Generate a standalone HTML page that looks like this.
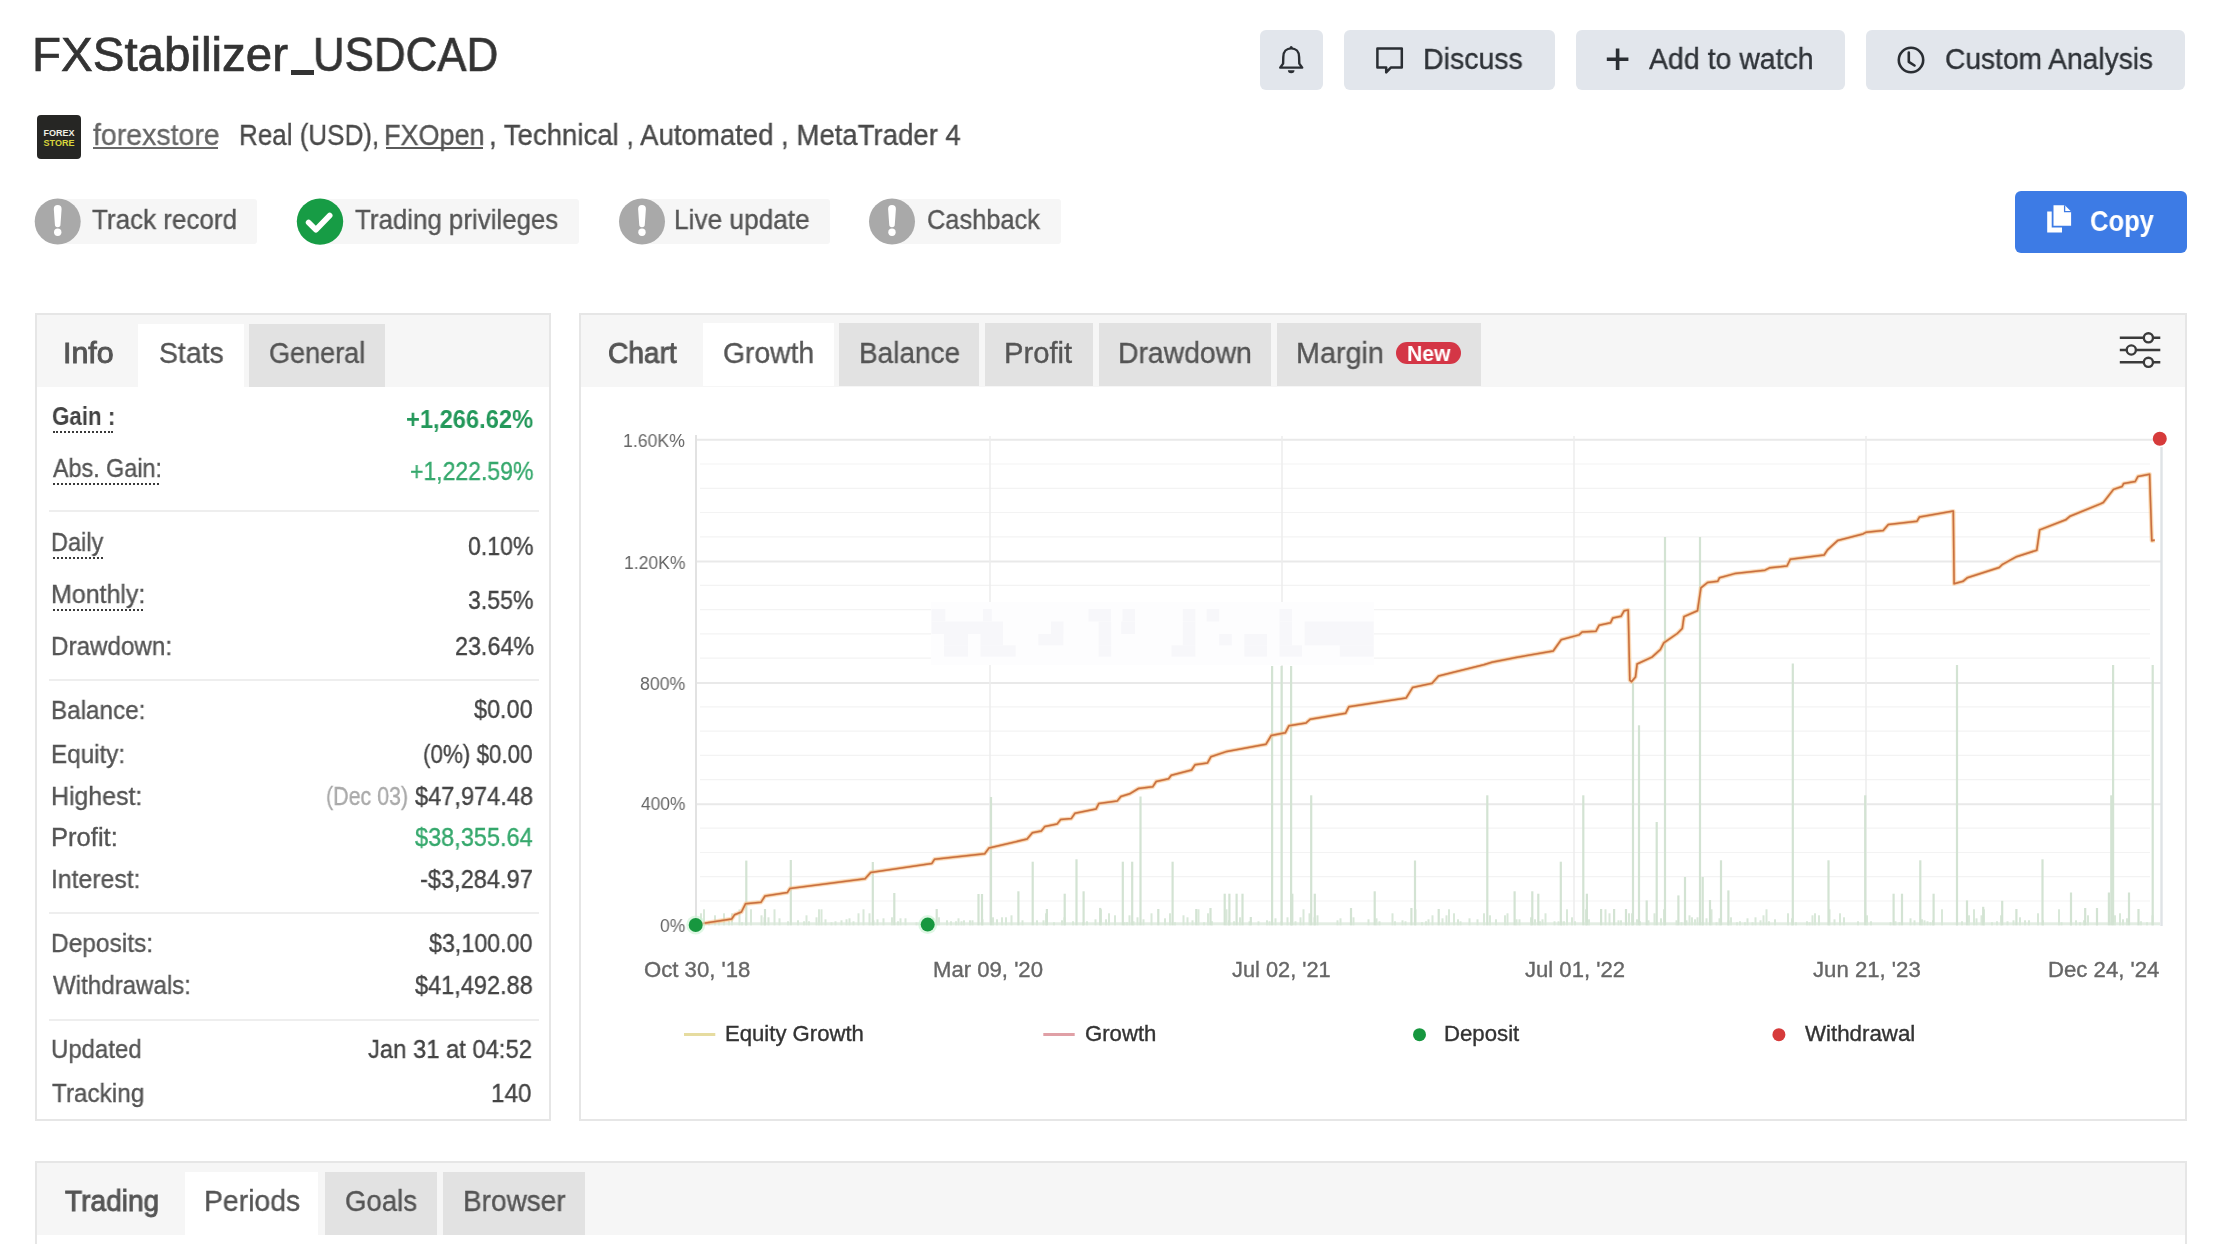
<!DOCTYPE html>
<html><head><meta charset="utf-8"><title>FXStabilizer_USDCAD</title>
<style>
html,body{margin:0;padding:0;background:#fff;width:2230px;height:1244px;overflow:hidden;position:relative;}
body{font-family:"Liberation Sans",sans-serif;}
.abs{position:absolute;}
.t{position:absolute;line-height:1;white-space:nowrap;transform-origin:0 0;will-change:transform;}
</style></head><body>
<div class="abs" style="left:291.3px;top:70.2px;width:22.399999999999977px;height:4.3999999999999915px;background:#333;"></div>
<div class="abs" style="left:1260px;top:29.5px;width:63px;height:60.5px;background:#e2e6ec;border-radius:6px;"></div>
<div class="abs" style="left:1343.5px;top:29.5px;width:211.5px;height:60.5px;background:#e2e6ec;border-radius:6px;"></div>
<div class="abs" style="left:1575.5px;top:29.5px;width:269.0px;height:60.5px;background:#e2e6ec;border-radius:6px;"></div>
<div class="abs" style="left:1866px;top:29.5px;width:318.5px;height:60.5px;background:#e2e6ec;border-radius:6px;"></div>
<svg class="abs" style="left:0;top:0" width="2230" height="260" viewBox="0 0 2230 260">
<g fill="none" stroke="#2a2e33" stroke-width="2.6" stroke-linejoin="round" stroke-linecap="round">
 <path d="M1280.2 67.6 L1302.2 67.6 L1299.3 63.6 L1299.1 57 C1299.1 51.6 1295.8 48.4 1291.2 48.4 C1286.6 48.4 1283.3 51.6 1283.3 57 L1283.1 63.6 Z" stroke-width="2.4"/>
 <path d="M1377.4 48.6 H1401.8 V67.4 H1391 L1386.2 72.4 V67.4 H1377.4 Z" stroke-width="2.5"/>
 <path d="M1617.6 48.5 V70 M1606.8 59.2 H1628.4" stroke-width="3.6" stroke-linecap="butt"/>
 <circle cx="1911" cy="60" r="12.2"/>
 <path d="M1908.8 52.5 V61.8 L1914.5 65.5"/>
</g>
<path d="M1287.9 70.2 h6.6 a3.3 3 0 0 1 -6.6 0 z" fill="#2a2e33"/>
<circle cx="1291.2" cy="47.4" r="1.5" fill="#2a2e33"/>
</svg>
<div class="abs" style="left:37.2px;top:114.9px;width:43.5px;height:43.900000000000006px;background:#262624;border-radius:4px;"></div>
<svg class="abs" style="left:37px;top:115px" width="44" height="44" viewBox="0 0 44 44">
<text x="22" y="21" text-anchor="middle" font-family="Liberation Sans" font-weight="bold" font-size="9.5" fill="#f1f1e6" textLength="31" lengthAdjust="spacingAndGlyphs">FOREX</text>
<text x="22" y="30.5" text-anchor="middle" font-family="Liberation Sans" font-weight="bold" font-size="9.5" fill="#d9d63c" textLength="31" lengthAdjust="spacingAndGlyphs">STORE</text>
</svg>
<div class="abs" style="left:92.8px;top:147.2px;width:125.50000000000001px;height:2.0px;background:#6a6a6a;"></div>
<div class="abs" style="left:386px;top:147.2px;width:97px;height:2.0px;background:#5a5a5a;"></div>
<div class="abs" style="left:57.7px;top:199px;width:199.5px;height:45.30000000000001px;background:#f6f6f6;border-radius:0 3px 3px 0;"></div>
<div class="abs" style="left:319.6px;top:199px;width:259.1px;height:45.30000000000001px;background:#f6f6f6;border-radius:0 3px 3px 0;"></div>
<div class="abs" style="left:642px;top:199px;width:187.79999999999995px;height:45.30000000000001px;background:#f6f6f6;border-radius:0 3px 3px 0;"></div>
<div class="abs" style="left:892px;top:199px;width:168.79999999999995px;height:45.30000000000001px;background:#f6f6f6;border-radius:0 3px 3px 0;"></div>
<svg class="abs" style="left:0;top:190px" width="1100" height="64" viewBox="0 190 1100 64">
<circle cx="57.7" cy="221.6" r="23" fill="#a9a9a9"/>
<circle cx="642" cy="221.6" r="23" fill="#a9a9a9"/>
<circle cx="892" cy="221.6" r="23" fill="#a9a9a9"/>
<g fill="#ffffff">
 <path d="M53.800000000000004 209 a3.9 3.9 0 0 1 7.8 0 l-1.1 15.5 a2.8 2.8 0 0 1 -5.6 0 z"/><circle cx="57.7" cy="232.3" r="3.7"/>
 <path d="M638.1 209 a3.9 3.9 0 0 1 7.8 0 l-1.1 15.5 a2.8 2.8 0 0 1 -5.6 0 z"/><circle cx="642" cy="232.3" r="3.7"/>
 <path d="M888.1 209 a3.9 3.9 0 0 1 7.8 0 l-1.1 15.5 a2.8 2.8 0 0 1 -5.6 0 z"/><circle cx="892" cy="232.3" r="3.7"/>
</g>
<circle cx="320" cy="221.6" r="23.2" fill="#179c45"/>
<path d="M308.6 222.5 l7.3 7.2 l13.8 -14.2" fill="none" stroke="#ffffff" stroke-width="5.6" stroke-linecap="round" stroke-linejoin="round"/>
</svg>
<div class="abs" style="left:2015.3px;top:191px;width:171.29999999999995px;height:61.69999999999999px;background:#3d7be5;border-radius:6px;"></div>
<svg class="abs" style="left:2040px;top:200px" width="40" height="40" viewBox="2040 200 40 40">
<path d="M2047.2 211.5 h4.5 v16 h10.3 v5 h-14.8 z" fill="#fff"/>
<path d="M2053.5 205.2 h11.3 l6.3 6.3 v14.3 h-17.6 z" fill="#fff"/>
<path d="M2064.6 205.2 v6.5 h6.5" fill="none" stroke="#3d7be5" stroke-width="1.3"/>
</svg>
<div class="abs" style="left:35px;top:313px;width:516px;height:808px;border:2px solid #e6e6e6;box-sizing:border-box;background:#fff;"></div>
<div class="abs" style="left:37px;top:315px;width:512px;height:71.5px;background:#f6f6f6;"></div>
<div class="abs" style="left:138px;top:323.5px;width:105.5px;height:63.0px;background:#ffffff;"></div>
<div class="abs" style="left:249px;top:323.5px;width:135.7px;height:63.0px;background:#e2e2e2;"></div>
<div class="abs" style="left:48.7px;top:510.4px;width:490.3px;height:2.0px;background:#eeeeee;"></div>
<div class="abs" style="left:48.7px;top:679px;width:490.3px;height:2px;background:#eeeeee;"></div>
<div class="abs" style="left:48.7px;top:912.3px;width:490.3px;height:2.0px;background:#eeeeee;"></div>
<div class="abs" style="left:48.7px;top:1018.8px;width:490.3px;height:2.0px;background:#eeeeee;"></div>
<div class="abs" style="left:52.6px;top:430.6px;width:60.800000000000004px;height:0;border-top:2.4px dotted #3a3a3a;"></div>
<div class="abs" style="left:52.6px;top:482.8px;width:106.80000000000001px;height:0;border-top:2.4px dotted #3a3a3a;"></div>
<div class="abs" style="left:52.6px;top:556.8px;width:50.4px;height:0;border-top:2.4px dotted #3a3a3a;"></div>
<div class="abs" style="left:52.6px;top:608.8px;width:90.20000000000002px;height:0;border-top:2.4px dotted #3a3a3a;"></div>
<div class="abs" style="left:579px;top:313px;width:1608px;height:808px;border:2px solid #e6e6e6;box-sizing:border-box;background:#fff;"></div>
<div class="abs" style="left:581px;top:315px;width:1604px;height:71.5px;background:#f6f6f6;"></div>
<div class="abs" style="left:703px;top:323.3px;width:131.20000000000005px;height:63.19999999999999px;background:#ffffff;"></div>
<div class="abs" style="left:839px;top:323.3px;width:139.79999999999995px;height:63.19999999999999px;background:#e2e2e2;"></div>
<div class="abs" style="left:985px;top:323.3px;width:107.59999999999991px;height:63.19999999999999px;background:#e2e2e2;"></div>
<div class="abs" style="left:1098.9px;top:323.3px;width:171.79999999999995px;height:63.19999999999999px;background:#e2e2e2;"></div>
<div class="abs" style="left:1277.2px;top:323.3px;width:203.5px;height:63.19999999999999px;background:#e2e2e2;"></div>
<div class="abs" style="left:1396px;top:342.3px;width:65.40000000000009px;height:22.099999999999966px;background:#d43646;border-radius:11px;"></div>
<svg class="abs" style="left:2110px;top:325px" width="60" height="50" viewBox="2110 325 60 50">
<g fill="none" stroke="#3a3a3a" stroke-width="2.4">
<path d="M2119.8 337.8 H2143.4 M2153.4 337.8 H2160.3"/>
<path d="M2119.8 350 H2126.3 M2136.3 350 H2160.3"/>
<path d="M2119.8 362.3 H2143.4 M2153.4 362.3 H2160.3"/>
<circle cx="2148.4" cy="337.8" r="4.6"/>
<circle cx="2131.3" cy="350" r="4.6"/>
<circle cx="2148.4" cy="362.3" r="4.6"/>
</g></svg>
<div class="abs" style="left:35px;top:1161px;width:2152px;height:99px;border:2px solid #e6e6e6;box-sizing:border-box;background:#fff;"></div>
<div class="abs" style="left:37px;top:1163px;width:2148px;height:71.70000000000005px;background:#f6f6f6;"></div>
<div class="abs" style="left:185px;top:1171.7px;width:133.2px;height:63.0px;background:#ffffff;"></div>
<div class="abs" style="left:325px;top:1171.7px;width:111.60000000000002px;height:63.0px;background:#e2e2e2;"></div>
<div class="abs" style="left:442.8px;top:1171.7px;width:142.3px;height:63.0px;background:#e2e2e2;"></div>
<svg class="abs" style="left:0;top:0" width="2230" height="1244" viewBox="0 0 2230 1244">
<line x1="700" y1="464.0" x2="2150" y2="464.0" stroke="#f3f3f3" stroke-width="1.2"/>
<line x1="700" y1="488.3" x2="2150" y2="488.3" stroke="#f3f3f3" stroke-width="1.2"/>
<line x1="700" y1="512.5" x2="2150" y2="512.5" stroke="#f3f3f3" stroke-width="1.2"/>
<line x1="700" y1="536.8" x2="2150" y2="536.8" stroke="#f3f3f3" stroke-width="1.2"/>
<line x1="700" y1="585.4" x2="2150" y2="585.4" stroke="#f3f3f3" stroke-width="1.2"/>
<line x1="700" y1="609.7" x2="2150" y2="609.7" stroke="#f3f3f3" stroke-width="1.2"/>
<line x1="700" y1="633.9" x2="2150" y2="633.9" stroke="#f3f3f3" stroke-width="1.2"/>
<line x1="700" y1="658.2" x2="2150" y2="658.2" stroke="#f3f3f3" stroke-width="1.2"/>
<line x1="700" y1="706.8" x2="2150" y2="706.8" stroke="#f3f3f3" stroke-width="1.2"/>
<line x1="700" y1="731.1" x2="2150" y2="731.1" stroke="#f3f3f3" stroke-width="1.2"/>
<line x1="700" y1="755.3" x2="2150" y2="755.3" stroke="#f3f3f3" stroke-width="1.2"/>
<line x1="700" y1="779.6" x2="2150" y2="779.6" stroke="#f3f3f3" stroke-width="1.2"/>
<line x1="700" y1="828.2" x2="2150" y2="828.2" stroke="#f3f3f3" stroke-width="1.2"/>
<line x1="700" y1="852.5" x2="2150" y2="852.5" stroke="#f3f3f3" stroke-width="1.2"/>
<line x1="700" y1="876.7" x2="2150" y2="876.7" stroke="#f3f3f3" stroke-width="1.2"/>
<line x1="700" y1="901.0" x2="2150" y2="901.0" stroke="#f3f3f3" stroke-width="1.2"/>
<line x1="696" y1="439.7" x2="2161" y2="439.7" stroke="#e9e9e9" stroke-width="2"/>
<line x1="696" y1="561.5" x2="2161" y2="561.5" stroke="#e9e9e9" stroke-width="2"/>
<line x1="696" y1="682.9" x2="2161" y2="682.9" stroke="#e9e9e9" stroke-width="2"/>
<line x1="696" y1="804.3" x2="2161" y2="804.3" stroke="#e9e9e9" stroke-width="2"/>
<line x1="990" y1="436" x2="990" y2="925" stroke="#ececec" stroke-width="1.5"/>
<line x1="1282" y1="436" x2="1282" y2="925" stroke="#ececec" stroke-width="1.5"/>
<line x1="1574" y1="436" x2="1574" y2="925" stroke="#ececec" stroke-width="1.5"/>
<line x1="1866" y1="436" x2="1866" y2="925" stroke="#ececec" stroke-width="1.5"/>
<line x1="696" y1="435" x2="696" y2="926" stroke="#e2e2e2" stroke-width="2"/>
<line x1="2161.5" y1="447" x2="2161.5" y2="926" stroke="#dfe3e6" stroke-width="2.4"/>
<rect x="931" y="602" width="443" height="63" fill="#fdfdfe"/>
<rect x="931.5" y="608.9" width="13.8" height="12.6" fill="#f7f7fa"/>
<rect x="983.0" y="608.9" width="8.8" height="12.6" fill="#f7f7fa"/>
<rect x="1088.5" y="608.9" width="22.6" height="12.6" fill="#f7f7fa"/>
<rect x="1122.5" y="608.9" width="12.6" height="12.6" fill="#f7f7fa"/>
<rect x="1182.8" y="608.9" width="12.6" height="12.6" fill="#f7f7fa"/>
<rect x="1206.6" y="608.9" width="12.6" height="12.6" fill="#f7f7fa"/>
<rect x="1279.5" y="608.9" width="12.6" height="12.6" fill="#f7f7fa"/>
<rect x="931.5" y="621.5" width="71.6" height="12.6" fill="#f7f7fa"/>
<rect x="1050.9" y="621.5" width="12.6" height="12.6" fill="#f7f7fa"/>
<rect x="1098.6" y="621.5" width="12.6" height="12.6" fill="#f7f7fa"/>
<rect x="1121.2" y="621.5" width="13.8" height="12.6" fill="#f7f7fa"/>
<rect x="1182.8" y="621.5" width="12.6" height="12.6" fill="#f7f7fa"/>
<rect x="1279.5" y="621.5" width="12.6" height="12.6" fill="#f7f7fa"/>
<rect x="1304.6" y="621.5" width="69.1" height="12.6" fill="#f7f7fa"/>
<rect x="944.1" y="634.0" width="23.9" height="11.3" fill="#f7f7fa"/>
<rect x="980.5" y="634.0" width="22.6" height="11.3" fill="#f7f7fa"/>
<rect x="1038.3" y="634.0" width="25.1" height="11.3" fill="#f7f7fa"/>
<rect x="1098.6" y="634.0" width="12.6" height="11.3" fill="#f7f7fa"/>
<rect x="1182.8" y="634.0" width="12.6" height="11.3" fill="#f7f7fa"/>
<rect x="1219.2" y="634.0" width="12.6" height="11.3" fill="#f7f7fa"/>
<rect x="1244.3" y="634.0" width="22.6" height="11.3" fill="#f7f7fa"/>
<rect x="1279.5" y="634.0" width="12.6" height="11.3" fill="#f7f7fa"/>
<rect x="1304.6" y="634.0" width="69.1" height="11.3" fill="#f7f7fa"/>
<rect x="944.1" y="645.3" width="23.9" height="11.3" fill="#f7f7fa"/>
<rect x="980.5" y="645.3" width="35.2" height="11.3" fill="#f7f7fa"/>
<rect x="1098.6" y="645.3" width="12.6" height="11.3" fill="#f7f7fa"/>
<rect x="1171.5" y="645.3" width="23.9" height="11.3" fill="#f7f7fa"/>
<rect x="1244.3" y="645.3" width="22.6" height="11.3" fill="#f7f7fa"/>
<rect x="1279.5" y="645.3" width="22.6" height="11.3" fill="#f7f7fa"/>
<rect x="1339.8" y="645.3" width="33.9" height="11.3" fill="#f7f7fa"/>
<rect x="697" y="922.3" width="1463" height="3" fill="#e3ede3"/>
<rect x="700.0" y="913.3" width="2" height="12" fill="#d9e8d9"/>
<rect x="703.0" y="909.3" width="2" height="16" fill="#d9e8d9"/>
<rect x="708.0" y="921.3" width="2" height="4" fill="#d9e8d9"/>
<rect x="714.0" y="915.3" width="2" height="10" fill="#d9e8d9"/>
<rect x="718.0" y="920.3" width="2" height="5" fill="#d9e8d9"/>
<rect x="723.0" y="913.3" width="2" height="12" fill="#d9e8d9"/>
<rect x="728.0" y="921.3" width="2" height="4" fill="#d9e8d9"/>
<rect x="731.0" y="913.3" width="2" height="12" fill="#d9e8d9"/>
<rect x="738.5" y="909.3" width="2" height="16" fill="#d9e8d9"/>
<rect x="741.0" y="922.3" width="2" height="3" fill="#d9e8d9"/>
<rect x="745.0" y="917.3" width="2" height="8" fill="#d9e8d9"/>
<rect x="750.0" y="909.3" width="2" height="16" fill="#d9e8d9"/>
<rect x="760.5" y="915.3" width="2" height="10" fill="#d9e8d9"/>
<rect x="763.5" y="917.3" width="2" height="8" fill="#d9e8d9"/>
<rect x="767.5" y="917.3" width="2" height="8" fill="#d9e8d9"/>
<rect x="773.5" y="909.3" width="2" height="16" fill="#d9e8d9"/>
<rect x="778.5" y="918.3" width="2" height="7" fill="#d9e8d9"/>
<rect x="787.0" y="921.3" width="2" height="4" fill="#d9e8d9"/>
<rect x="797.0" y="920.3" width="2" height="5" fill="#d9e8d9"/>
<rect x="803.0" y="921.3" width="2" height="4" fill="#d9e8d9"/>
<rect x="805.5" y="915.3" width="2" height="10" fill="#d9e8d9"/>
<rect x="808.0" y="921.3" width="2" height="4" fill="#d9e8d9"/>
<rect x="815.5" y="917.3" width="2" height="8" fill="#d9e8d9"/>
<rect x="818.0" y="909.3" width="2" height="16" fill="#d9e8d9"/>
<rect x="820.5" y="909.3" width="2" height="16" fill="#d9e8d9"/>
<rect x="824.5" y="919.3" width="2" height="6" fill="#d9e8d9"/>
<rect x="830.5" y="922.3" width="2" height="3" fill="#d9e8d9"/>
<rect x="834.5" y="921.3" width="2" height="4" fill="#d9e8d9"/>
<rect x="840.5" y="920.3" width="2" height="5" fill="#d9e8d9"/>
<rect x="845.5" y="919.3" width="2" height="6" fill="#d9e8d9"/>
<rect x="848.5" y="918.3" width="2" height="7" fill="#d9e8d9"/>
<rect x="852.5" y="921.3" width="2" height="4" fill="#d9e8d9"/>
<rect x="857.5" y="913.3" width="2" height="12" fill="#d9e8d9"/>
<rect x="862.5" y="909.3" width="2" height="16" fill="#d9e8d9"/>
<rect x="868.5" y="913.3" width="2" height="12" fill="#d9e8d9"/>
<rect x="872.5" y="920.3" width="2" height="5" fill="#d9e8d9"/>
<rect x="876.5" y="919.3" width="2" height="6" fill="#d9e8d9"/>
<rect x="882.5" y="918.3" width="2" height="7" fill="#d9e8d9"/>
<rect x="891.0" y="917.3" width="2" height="8" fill="#d9e8d9"/>
<rect x="897.0" y="921.3" width="2" height="4" fill="#d9e8d9"/>
<rect x="899.5" y="918.3" width="2" height="7" fill="#d9e8d9"/>
<rect x="904.5" y="918.3" width="2" height="7" fill="#d9e8d9"/>
<rect x="915.5" y="922.3" width="2" height="3" fill="#d9e8d9"/>
<rect x="922.0" y="919.3" width="2" height="6" fill="#d9e8d9"/>
<rect x="928.0" y="921.3" width="2" height="4" fill="#d9e8d9"/>
<rect x="932.0" y="918.3" width="2" height="7" fill="#d9e8d9"/>
<rect x="938.0" y="917.3" width="2" height="8" fill="#d9e8d9"/>
<rect x="946.0" y="920.3" width="2" height="5" fill="#d9e8d9"/>
<rect x="950.0" y="921.3" width="2" height="4" fill="#d9e8d9"/>
<rect x="955.0" y="921.3" width="2" height="4" fill="#d9e8d9"/>
<rect x="957.5" y="918.3" width="2" height="7" fill="#d9e8d9"/>
<rect x="960.5" y="921.3" width="2" height="4" fill="#d9e8d9"/>
<rect x="963.0" y="920.3" width="2" height="5" fill="#d9e8d9"/>
<rect x="969.0" y="920.3" width="2" height="5" fill="#d9e8d9"/>
<rect x="971.5" y="920.3" width="2" height="5" fill="#d9e8d9"/>
<rect x="981.5" y="919.3" width="2" height="6" fill="#d9e8d9"/>
<rect x="992.0" y="917.3" width="2" height="8" fill="#d9e8d9"/>
<rect x="996.0" y="919.3" width="2" height="6" fill="#d9e8d9"/>
<rect x="1001.0" y="917.3" width="2" height="8" fill="#d9e8d9"/>
<rect x="1005.0" y="917.3" width="2" height="8" fill="#d9e8d9"/>
<rect x="1010.5" y="915.3" width="2" height="10" fill="#d9e8d9"/>
<rect x="1021.5" y="920.3" width="2" height="5" fill="#d9e8d9"/>
<rect x="1036.0" y="920.3" width="2" height="5" fill="#d9e8d9"/>
<rect x="1042.5" y="920.3" width="2" height="5" fill="#d9e8d9"/>
<rect x="1045.0" y="913.3" width="2" height="12" fill="#d9e8d9"/>
<rect x="1053.0" y="922.3" width="2" height="3" fill="#d9e8d9"/>
<rect x="1061.0" y="920.3" width="2" height="5" fill="#d9e8d9"/>
<rect x="1063.5" y="917.3" width="2" height="8" fill="#d9e8d9"/>
<rect x="1072.0" y="921.3" width="2" height="4" fill="#d9e8d9"/>
<rect x="1082.0" y="922.3" width="2" height="3" fill="#d9e8d9"/>
<rect x="1086.0" y="921.3" width="2" height="4" fill="#d9e8d9"/>
<rect x="1094.5" y="919.3" width="2" height="6" fill="#d9e8d9"/>
<rect x="1100.0" y="909.3" width="2" height="16" fill="#d9e8d9"/>
<rect x="1105.0" y="919.3" width="2" height="6" fill="#d9e8d9"/>
<rect x="1108.0" y="913.3" width="2" height="12" fill="#d9e8d9"/>
<rect x="1114.0" y="915.3" width="2" height="10" fill="#d9e8d9"/>
<rect x="1123.5" y="922.3" width="2" height="3" fill="#d9e8d9"/>
<rect x="1126.0" y="922.3" width="2" height="3" fill="#d9e8d9"/>
<rect x="1128.5" y="915.3" width="2" height="10" fill="#d9e8d9"/>
<rect x="1132.5" y="921.3" width="2" height="4" fill="#d9e8d9"/>
<rect x="1136.5" y="917.3" width="2" height="8" fill="#d9e8d9"/>
<rect x="1142.5" y="919.3" width="2" height="6" fill="#d9e8d9"/>
<rect x="1150.5" y="913.3" width="2" height="12" fill="#d9e8d9"/>
<rect x="1164.0" y="918.3" width="2" height="7" fill="#d9e8d9"/>
<rect x="1169.0" y="913.3" width="2" height="12" fill="#d9e8d9"/>
<rect x="1174.0" y="922.3" width="2" height="3" fill="#d9e8d9"/>
<rect x="1182.5" y="915.3" width="2" height="10" fill="#d9e8d9"/>
<rect x="1186.5" y="917.3" width="2" height="8" fill="#d9e8d9"/>
<rect x="1191.5" y="920.3" width="2" height="5" fill="#d9e8d9"/>
<rect x="1197.5" y="909.3" width="2" height="16" fill="#d9e8d9"/>
<rect x="1203.0" y="922.3" width="2" height="3" fill="#d9e8d9"/>
<rect x="1207.0" y="913.3" width="2" height="12" fill="#d9e8d9"/>
<rect x="1211.0" y="921.3" width="2" height="4" fill="#d9e8d9"/>
<rect x="1225.5" y="909.3" width="2" height="16" fill="#d9e8d9"/>
<rect x="1228.0" y="920.3" width="2" height="5" fill="#d9e8d9"/>
<rect x="1233.0" y="921.3" width="2" height="4" fill="#d9e8d9"/>
<rect x="1239.0" y="917.3" width="2" height="8" fill="#d9e8d9"/>
<rect x="1248.5" y="921.3" width="2" height="4" fill="#d9e8d9"/>
<rect x="1257.5" y="921.3" width="2" height="4" fill="#d9e8d9"/>
<rect x="1266.0" y="920.3" width="2" height="5" fill="#d9e8d9"/>
<rect x="1268.5" y="921.3" width="2" height="4" fill="#d9e8d9"/>
<rect x="1274.5" y="918.3" width="2" height="7" fill="#d9e8d9"/>
<rect x="1280.5" y="921.3" width="2" height="4" fill="#d9e8d9"/>
<rect x="1286.5" y="917.3" width="2" height="8" fill="#d9e8d9"/>
<rect x="1290.5" y="917.3" width="2" height="8" fill="#d9e8d9"/>
<rect x="1294.5" y="921.3" width="2" height="4" fill="#d9e8d9"/>
<rect x="1299.5" y="917.3" width="2" height="8" fill="#d9e8d9"/>
<rect x="1302.5" y="909.3" width="2" height="16" fill="#d9e8d9"/>
<rect x="1308.5" y="913.3" width="2" height="12" fill="#d9e8d9"/>
<rect x="1313.5" y="917.3" width="2" height="8" fill="#d9e8d9"/>
<rect x="1316.5" y="915.3" width="2" height="10" fill="#d9e8d9"/>
<rect x="1336.5" y="920.3" width="2" height="5" fill="#d9e8d9"/>
<rect x="1339.5" y="918.3" width="2" height="7" fill="#d9e8d9"/>
<rect x="1352.5" y="917.3" width="2" height="8" fill="#d9e8d9"/>
<rect x="1367.5" y="919.3" width="2" height="6" fill="#d9e8d9"/>
<rect x="1375.5" y="918.3" width="2" height="7" fill="#d9e8d9"/>
<rect x="1378.5" y="921.3" width="2" height="4" fill="#d9e8d9"/>
<rect x="1391.5" y="913.3" width="2" height="12" fill="#d9e8d9"/>
<rect x="1394.0" y="921.3" width="2" height="4" fill="#d9e8d9"/>
<rect x="1401.5" y="920.3" width="2" height="5" fill="#d9e8d9"/>
<rect x="1404.5" y="921.3" width="2" height="4" fill="#d9e8d9"/>
<rect x="1414.5" y="909.3" width="2" height="16" fill="#d9e8d9"/>
<rect x="1421.0" y="922.3" width="2" height="3" fill="#d9e8d9"/>
<rect x="1425.0" y="921.3" width="2" height="4" fill="#d9e8d9"/>
<rect x="1427.5" y="919.3" width="2" height="6" fill="#d9e8d9"/>
<rect x="1431.5" y="915.3" width="2" height="10" fill="#d9e8d9"/>
<rect x="1441.5" y="918.3" width="2" height="7" fill="#d9e8d9"/>
<rect x="1445.5" y="915.3" width="2" height="10" fill="#d9e8d9"/>
<rect x="1448.0" y="909.3" width="2" height="16" fill="#d9e8d9"/>
<rect x="1453.0" y="913.3" width="2" height="12" fill="#d9e8d9"/>
<rect x="1457.0" y="919.3" width="2" height="6" fill="#d9e8d9"/>
<rect x="1459.5" y="921.3" width="2" height="4" fill="#d9e8d9"/>
<rect x="1468.5" y="918.3" width="2" height="7" fill="#d9e8d9"/>
<rect x="1476.5" y="919.3" width="2" height="6" fill="#d9e8d9"/>
<rect x="1483.0" y="913.3" width="2" height="12" fill="#d9e8d9"/>
<rect x="1489.0" y="915.3" width="2" height="10" fill="#d9e8d9"/>
<rect x="1495.0" y="919.3" width="2" height="6" fill="#d9e8d9"/>
<rect x="1504.0" y="915.3" width="2" height="10" fill="#d9e8d9"/>
<rect x="1506.5" y="913.3" width="2" height="12" fill="#d9e8d9"/>
<rect x="1515.5" y="919.3" width="2" height="6" fill="#d9e8d9"/>
<rect x="1518.5" y="919.3" width="2" height="6" fill="#d9e8d9"/>
<rect x="1530.0" y="917.3" width="2" height="8" fill="#d9e8d9"/>
<rect x="1534.0" y="919.3" width="2" height="6" fill="#d9e8d9"/>
<rect x="1539.0" y="921.3" width="2" height="4" fill="#d9e8d9"/>
<rect x="1541.5" y="919.3" width="2" height="6" fill="#d9e8d9"/>
<rect x="1544.5" y="913.3" width="2" height="12" fill="#d9e8d9"/>
<rect x="1553.5" y="921.3" width="2" height="4" fill="#d9e8d9"/>
<rect x="1557.5" y="921.3" width="2" height="4" fill="#d9e8d9"/>
<rect x="1560.5" y="921.3" width="2" height="4" fill="#d9e8d9"/>
<rect x="1563.0" y="921.3" width="2" height="4" fill="#d9e8d9"/>
<rect x="1566.0" y="909.3" width="2" height="16" fill="#d9e8d9"/>
<rect x="1571.0" y="917.3" width="2" height="8" fill="#d9e8d9"/>
<rect x="1574.0" y="921.3" width="2" height="4" fill="#d9e8d9"/>
<rect x="1585.0" y="909.3" width="2" height="16" fill="#d9e8d9"/>
<rect x="1588.0" y="919.3" width="2" height="6" fill="#d9e8d9"/>
<rect x="1604.5" y="909.3" width="2" height="16" fill="#d9e8d9"/>
<rect x="1608.5" y="913.3" width="2" height="12" fill="#d9e8d9"/>
<rect x="1617.5" y="920.3" width="2" height="5" fill="#d9e8d9"/>
<rect x="1620.0" y="920.3" width="2" height="5" fill="#d9e8d9"/>
<rect x="1625.0" y="915.3" width="2" height="10" fill="#d9e8d9"/>
<rect x="1628.0" y="913.3" width="2" height="12" fill="#d9e8d9"/>
<rect x="1631.0" y="913.3" width="2" height="12" fill="#d9e8d9"/>
<rect x="1636.0" y="919.3" width="2" height="6" fill="#d9e8d9"/>
<rect x="1639.0" y="921.3" width="2" height="4" fill="#d9e8d9"/>
<rect x="1647.5" y="920.3" width="2" height="5" fill="#d9e8d9"/>
<rect x="1653.5" y="913.3" width="2" height="12" fill="#d9e8d9"/>
<rect x="1660.0" y="918.3" width="2" height="7" fill="#d9e8d9"/>
<rect x="1663.0" y="909.3" width="2" height="16" fill="#d9e8d9"/>
<rect x="1675.5" y="920.3" width="2" height="5" fill="#d9e8d9"/>
<rect x="1680.5" y="922.3" width="2" height="3" fill="#d9e8d9"/>
<rect x="1685.5" y="920.3" width="2" height="5" fill="#d9e8d9"/>
<rect x="1688.5" y="915.3" width="2" height="10" fill="#d9e8d9"/>
<rect x="1691.0" y="917.3" width="2" height="8" fill="#d9e8d9"/>
<rect x="1694.0" y="919.3" width="2" height="6" fill="#d9e8d9"/>
<rect x="1696.5" y="917.3" width="2" height="8" fill="#d9e8d9"/>
<rect x="1701.5" y="922.3" width="2" height="3" fill="#d9e8d9"/>
<rect x="1705.5" y="918.3" width="2" height="7" fill="#d9e8d9"/>
<rect x="1710.5" y="909.3" width="2" height="16" fill="#d9e8d9"/>
<rect x="1715.5" y="922.3" width="2" height="3" fill="#d9e8d9"/>
<rect x="1718.5" y="918.3" width="2" height="7" fill="#d9e8d9"/>
<rect x="1727.5" y="920.3" width="2" height="5" fill="#d9e8d9"/>
<rect x="1730.0" y="917.3" width="2" height="8" fill="#d9e8d9"/>
<rect x="1736.0" y="922.3" width="2" height="3" fill="#d9e8d9"/>
<rect x="1739.0" y="921.3" width="2" height="4" fill="#d9e8d9"/>
<rect x="1744.0" y="922.3" width="2" height="3" fill="#d9e8d9"/>
<rect x="1746.5" y="918.3" width="2" height="7" fill="#d9e8d9"/>
<rect x="1751.5" y="922.3" width="2" height="3" fill="#d9e8d9"/>
<rect x="1754.5" y="917.3" width="2" height="8" fill="#d9e8d9"/>
<rect x="1759.5" y="920.3" width="2" height="5" fill="#d9e8d9"/>
<rect x="1762.5" y="915.3" width="2" height="10" fill="#d9e8d9"/>
<rect x="1765.5" y="909.3" width="2" height="16" fill="#d9e8d9"/>
<rect x="1768.0" y="921.3" width="2" height="4" fill="#d9e8d9"/>
<rect x="1774.0" y="919.3" width="2" height="6" fill="#d9e8d9"/>
<rect x="1787.0" y="913.3" width="2" height="12" fill="#d9e8d9"/>
<rect x="1791.0" y="918.3" width="2" height="7" fill="#d9e8d9"/>
<rect x="1795.0" y="922.3" width="2" height="3" fill="#d9e8d9"/>
<rect x="1806.0" y="921.3" width="2" height="4" fill="#d9e8d9"/>
<rect x="1808.5" y="922.3" width="2" height="3" fill="#d9e8d9"/>
<rect x="1811.5" y="915.3" width="2" height="10" fill="#d9e8d9"/>
<rect x="1814.0" y="913.3" width="2" height="12" fill="#d9e8d9"/>
<rect x="1818.0" y="915.3" width="2" height="10" fill="#d9e8d9"/>
<rect x="1828.5" y="909.3" width="2" height="16" fill="#d9e8d9"/>
<rect x="1833.5" y="919.3" width="2" height="6" fill="#d9e8d9"/>
<rect x="1839.0" y="913.3" width="2" height="12" fill="#d9e8d9"/>
<rect x="1843.0" y="917.3" width="2" height="8" fill="#d9e8d9"/>
<rect x="1857.0" y="921.3" width="2" height="4" fill="#d9e8d9"/>
<rect x="1866.0" y="915.3" width="2" height="10" fill="#d9e8d9"/>
<rect x="1870.0" y="921.3" width="2" height="4" fill="#d9e8d9"/>
<rect x="1889.5" y="922.3" width="2" height="3" fill="#d9e8d9"/>
<rect x="1894.5" y="921.3" width="2" height="4" fill="#d9e8d9"/>
<rect x="1898.5" y="922.3" width="2" height="3" fill="#d9e8d9"/>
<rect x="1909.5" y="918.3" width="2" height="7" fill="#d9e8d9"/>
<rect x="1913.5" y="920.3" width="2" height="5" fill="#d9e8d9"/>
<rect x="1921.0" y="919.3" width="2" height="6" fill="#d9e8d9"/>
<rect x="1923.5" y="920.3" width="2" height="5" fill="#d9e8d9"/>
<rect x="1926.5" y="921.3" width="2" height="4" fill="#d9e8d9"/>
<rect x="1929.5" y="922.3" width="2" height="3" fill="#d9e8d9"/>
<rect x="1932.0" y="920.3" width="2" height="5" fill="#d9e8d9"/>
<rect x="1941.0" y="909.3" width="2" height="16" fill="#d9e8d9"/>
<rect x="1956.0" y="921.3" width="2" height="4" fill="#d9e8d9"/>
<rect x="1961.0" y="921.3" width="2" height="4" fill="#d9e8d9"/>
<rect x="1968.0" y="915.3" width="2" height="10" fill="#d9e8d9"/>
<rect x="1973.0" y="909.3" width="2" height="16" fill="#d9e8d9"/>
<rect x="1975.5" y="918.3" width="2" height="7" fill="#d9e8d9"/>
<rect x="1980.5" y="915.3" width="2" height="10" fill="#d9e8d9"/>
<rect x="1983.0" y="909.3" width="2" height="16" fill="#d9e8d9"/>
<rect x="1991.0" y="922.3" width="2" height="3" fill="#d9e8d9"/>
<rect x="1996.0" y="921.3" width="2" height="4" fill="#d9e8d9"/>
<rect x="2000.0" y="915.3" width="2" height="10" fill="#d9e8d9"/>
<rect x="2006.5" y="921.3" width="2" height="4" fill="#d9e8d9"/>
<rect x="2012.5" y="920.3" width="2" height="5" fill="#d9e8d9"/>
<rect x="2019.0" y="917.3" width="2" height="8" fill="#d9e8d9"/>
<rect x="2024.0" y="920.3" width="2" height="5" fill="#d9e8d9"/>
<rect x="2028.0" y="920.3" width="2" height="5" fill="#d9e8d9"/>
<rect x="2037.0" y="913.3" width="2" height="12" fill="#d9e8d9"/>
<rect x="2042.0" y="920.3" width="2" height="5" fill="#d9e8d9"/>
<rect x="2058.0" y="909.3" width="2" height="16" fill="#d9e8d9"/>
<rect x="2060.5" y="922.3" width="2" height="3" fill="#d9e8d9"/>
<rect x="2070.0" y="922.3" width="2" height="3" fill="#d9e8d9"/>
<rect x="2075.0" y="920.3" width="2" height="5" fill="#d9e8d9"/>
<rect x="2079.0" y="922.3" width="2" height="3" fill="#d9e8d9"/>
<rect x="2083.0" y="920.3" width="2" height="5" fill="#d9e8d9"/>
<rect x="2087.0" y="915.3" width="2" height="10" fill="#d9e8d9"/>
<rect x="2096.0" y="921.3" width="2" height="4" fill="#d9e8d9"/>
<rect x="2114.0" y="915.3" width="2" height="10" fill="#d9e8d9"/>
<rect x="2119.0" y="913.3" width="2" height="12" fill="#d9e8d9"/>
<rect x="2122.0" y="919.3" width="2" height="6" fill="#d9e8d9"/>
<rect x="2126.0" y="918.3" width="2" height="7" fill="#d9e8d9"/>
<rect x="2140.0" y="921.3" width="2" height="4" fill="#d9e8d9"/>
<rect x="2146.0" y="922.3" width="2" height="3" fill="#d9e8d9"/>
<rect x="2151.5" y="915.3" width="2" height="10" fill="#d9e8d9"/>
<rect x="745.2" y="860.6" width="2.2" height="64.7" fill="#d3e3d3"/>
<rect x="763.9" y="909.0" width="2.2" height="16.3" fill="#d3e3d3"/>
<rect x="789.7" y="860.0" width="2.2" height="65.3" fill="#d3e3d3"/>
<rect x="871.7" y="862.0" width="2.2" height="63.3" fill="#d3e3d3"/>
<rect x="893.2" y="893.0" width="2.2" height="32.3" fill="#d3e3d3"/>
<rect x="935.6" y="909.0" width="2.2" height="16.3" fill="#d3e3d3"/>
<rect x="977.4" y="894.0" width="2.2" height="31.3" fill="#d3e3d3"/>
<rect x="980.9" y="894.0" width="2.2" height="31.3" fill="#d3e3d3"/>
<rect x="989.9" y="797.0" width="2.2" height="128.3" fill="#d3e3d3"/>
<rect x="1017.3" y="891.3" width="2.2" height="34.0" fill="#d3e3d3"/>
<rect x="1031.6" y="861.7" width="2.2" height="63.6" fill="#d3e3d3"/>
<rect x="1045.8" y="909.0" width="2.2" height="16.3" fill="#d3e3d3"/>
<rect x="1063.6" y="893.7" width="2.2" height="31.6" fill="#d3e3d3"/>
<rect x="1075.4" y="859.3" width="2.2" height="66.0" fill="#d3e3d3"/>
<rect x="1082.5" y="891.3" width="2.2" height="34.0" fill="#d3e3d3"/>
<rect x="1099.1" y="907.9" width="2.2" height="17.4" fill="#d3e3d3"/>
<rect x="1121.7" y="861.7" width="2.2" height="63.6" fill="#d3e3d3"/>
<rect x="1131.1" y="861.7" width="2.2" height="63.6" fill="#d3e3d3"/>
<rect x="1139.4" y="796.5" width="2.2" height="128.8" fill="#d3e3d3"/>
<rect x="1157.2" y="909.0" width="2.2" height="16.3" fill="#d3e3d3"/>
<rect x="1171.5" y="861.7" width="2.2" height="63.6" fill="#d3e3d3"/>
<rect x="1195.2" y="909.0" width="2.2" height="16.3" fill="#d3e3d3"/>
<rect x="1209.4" y="908.0" width="2.2" height="17.3" fill="#d3e3d3"/>
<rect x="1223.6" y="893.7" width="2.2" height="31.6" fill="#d3e3d3"/>
<rect x="1228.3" y="893.7" width="2.2" height="31.6" fill="#d3e3d3"/>
<rect x="1235.5" y="893.7" width="2.2" height="31.6" fill="#d3e3d3"/>
<rect x="1241.4" y="893.7" width="2.2" height="31.6" fill="#d3e3d3"/>
<rect x="1249.7" y="917.0" width="2.2" height="8.3" fill="#d3e3d3"/>
<rect x="1271.0" y="666.0" width="2.2" height="259.3" fill="#d3e3d3"/>
<rect x="1280.5" y="666.0" width="2.2" height="259.3" fill="#d3e3d3"/>
<rect x="1290.0" y="666.0" width="2.2" height="259.3" fill="#d3e3d3"/>
<rect x="1291.2" y="893.7" width="2.2" height="31.6" fill="#d3e3d3"/>
<rect x="1310.1" y="795.3" width="2.2" height="130.0" fill="#d3e3d3"/>
<rect x="1313.7" y="893.7" width="2.2" height="31.6" fill="#d3e3d3"/>
<rect x="1349.9" y="908.0" width="2.2" height="17.3" fill="#d3e3d3"/>
<rect x="1373.6" y="891.3" width="2.2" height="34.0" fill="#d3e3d3"/>
<rect x="1410.3" y="908.0" width="2.2" height="17.3" fill="#d3e3d3"/>
<rect x="1413.9" y="860.5" width="2.2" height="64.8" fill="#d3e3d3"/>
<rect x="1437.6" y="909.0" width="2.2" height="16.3" fill="#d3e3d3"/>
<rect x="1486.2" y="795.3" width="2.2" height="130.0" fill="#d3e3d3"/>
<rect x="1513.5" y="891.3" width="2.2" height="34.0" fill="#d3e3d3"/>
<rect x="1531.2" y="891.3" width="2.2" height="34.0" fill="#d3e3d3"/>
<rect x="1537.2" y="893.7" width="2.2" height="31.6" fill="#d3e3d3"/>
<rect x="1559.7" y="861.7" width="2.2" height="63.6" fill="#d3e3d3"/>
<rect x="1582.2" y="795.3" width="2.2" height="130.0" fill="#d3e3d3"/>
<rect x="1585.8" y="893.7" width="2.2" height="31.6" fill="#d3e3d3"/>
<rect x="1600.0" y="909.0" width="2.2" height="16.3" fill="#d3e3d3"/>
<rect x="1613.0" y="909.0" width="2.2" height="16.3" fill="#d3e3d3"/>
<rect x="1624.9" y="909.0" width="2.2" height="16.3" fill="#d3e3d3"/>
<rect x="1631.9" y="682.5" width="2.2" height="242.8" fill="#d3e3d3"/>
<rect x="1637.9" y="725.3" width="2.2" height="200.0" fill="#d3e3d3"/>
<rect x="1645.6" y="900.4" width="2.2" height="24.9" fill="#d3e3d3"/>
<rect x="1655.6" y="822.0" width="2.2" height="103.3" fill="#d3e3d3"/>
<rect x="1663.9" y="537.0" width="2.2" height="388.3" fill="#d3e3d3"/>
<rect x="1677.3" y="895.4" width="2.2" height="29.9" fill="#d3e3d3"/>
<rect x="1683.9" y="877.0" width="2.2" height="48.3" fill="#d3e3d3"/>
<rect x="1698.9" y="537.0" width="2.2" height="388.3" fill="#d3e3d3"/>
<rect x="1701.6" y="877.0" width="2.2" height="48.3" fill="#d3e3d3"/>
<rect x="1708.9" y="900.0" width="2.2" height="25.3" fill="#d3e3d3"/>
<rect x="1719.9" y="860.3" width="2.2" height="65.0" fill="#d3e3d3"/>
<rect x="1727.3" y="890.4" width="2.2" height="34.9" fill="#d3e3d3"/>
<rect x="1791.7" y="663.5" width="2.2" height="261.8" fill="#d3e3d3"/>
<rect x="1827.4" y="860.3" width="2.2" height="65.0" fill="#d3e3d3"/>
<rect x="1864.1" y="795.3" width="2.2" height="130.0" fill="#d3e3d3"/>
<rect x="1892.5" y="893.7" width="2.2" height="31.6" fill="#d3e3d3"/>
<rect x="1900.9" y="893.7" width="2.2" height="31.6" fill="#d3e3d3"/>
<rect x="1919.2" y="860.3" width="2.2" height="65.0" fill="#d3e3d3"/>
<rect x="1932.5" y="893.7" width="2.2" height="31.6" fill="#d3e3d3"/>
<rect x="1955.9" y="665.0" width="2.2" height="260.3" fill="#d3e3d3"/>
<rect x="1965.9" y="900.4" width="2.2" height="24.9" fill="#d3e3d3"/>
<rect x="1982.1" y="906.8" width="2.2" height="18.5" fill="#d3e3d3"/>
<rect x="2001.1" y="900.8" width="2.2" height="24.5" fill="#d3e3d3"/>
<rect x="2015.3" y="909.0" width="2.2" height="16.3" fill="#d3e3d3"/>
<rect x="2041.4" y="859.3" width="2.2" height="66.0" fill="#d3e3d3"/>
<rect x="2069.9" y="892.5" width="2.2" height="32.8" fill="#d3e3d3"/>
<rect x="2084.1" y="908.0" width="2.2" height="17.3" fill="#d3e3d3"/>
<rect x="2095.9" y="908.0" width="2.2" height="17.3" fill="#d3e3d3"/>
<rect x="2107.8" y="892.5" width="2.2" height="32.8" fill="#d3e3d3"/>
<rect x="2110.2" y="795.3" width="2.2" height="130.0" fill="#d3e3d3"/>
<rect x="2112.0" y="665.0" width="2.2" height="260.3" fill="#d3e3d3"/>
<rect x="2127.9" y="892.5" width="2.2" height="32.8" fill="#d3e3d3"/>
<rect x="2137.4" y="909.0" width="2.2" height="16.3" fill="#d3e3d3"/>
<rect x="2151.6" y="665.0" width="2.2" height="260.3" fill="#d3e3d3"/>
<polyline points="695.6,924.6 731.7,919.0 734.5,914.8 741.4,912.0 745.6,903.7 760.9,902.3 765.0,896.0 787.3,892.6 790.0,888.4 865.1,878.7 870.7,872.4 931.9,863.4 934.6,859.2 984.7,853.7 988.9,848.1 1027.1,839.0 1032.4,832.8 1041.3,831.0 1044.8,826.6 1057.2,823.9 1060.7,819.5 1071.3,818.6 1074.9,813.3 1096.1,808.9 1098.8,803.6 1117.3,800.9 1120.9,796.5 1129.7,793.8 1138.5,788.5 1152.7,786.8 1156.2,781.5 1168.6,778.8 1171.3,775.3 1191.6,770.0 1195.1,764.7 1207.5,762.9 1211.0,756.7 1227.0,751.4 1265.9,744.3 1271.2,735.5 1285.3,732.8 1288.9,725.8 1306.1,722.9 1310.2,719.2 1345.7,713.2 1348.9,706.7 1406.2,697.9 1412.7,687.4 1432.1,683.3 1438.5,676.1 1451.4,672.8 1483.7,664.8 1491.8,662.3 1516.0,657.5 1553.2,651.0 1561.2,639.7 1579.0,634.9 1582.2,632.0 1595.9,631.3 1599.2,625.2 1610.5,622.8 1612.9,617.9 1621.0,616.3 1624.2,610.7 1628.2,609.9 1629.8,680.1 1631.5,681.7 1635.5,676.9 1637.1,664.0 1652.0,657.1 1660.4,649.5 1663.8,642.8 1677.3,633.5 1682.3,628.4 1684.0,616.6 1697.5,610.7 1700.9,587.9 1707.6,582.5 1717.8,581.2 1719.5,577.8 1734.7,573.6 1765.0,570.2 1770.1,567.7 1787.0,566.0 1790.4,559.2 1824.1,555.0 1827.5,549.9 1837.6,540.6 1863.0,533.9 1866.3,532.2 1883.2,530.5 1888.3,524.6 1917.0,521.2 1919.5,517.0 1953.3,511.1 1954.1,583.7 1963.0,581.3 1967.4,577.7 1999.2,567.5 2002.1,564.7 2016.5,556.7 2036.8,550.2 2039.7,529.9 2065.7,519.8 2070.1,516.2 2100.4,503.9 2103.3,502.5 2113.5,489.4 2122.1,486.5 2123.6,483.6 2135.2,481.5 2138.0,476.4 2149.6,474.2 2151.8,540.8 2154.7,540.1" fill="none" stroke="#f6b784" stroke-width="4.4" stroke-linejoin="round" opacity="0.45"/>
<polyline points="695.6,924.6 731.7,919.0 734.5,914.8 741.4,912.0 745.6,903.7 760.9,902.3 765.0,896.0 787.3,892.6 790.0,888.4 865.1,878.7 870.7,872.4 931.9,863.4 934.6,859.2 984.7,853.7 988.9,848.1 1027.1,839.0 1032.4,832.8 1041.3,831.0 1044.8,826.6 1057.2,823.9 1060.7,819.5 1071.3,818.6 1074.9,813.3 1096.1,808.9 1098.8,803.6 1117.3,800.9 1120.9,796.5 1129.7,793.8 1138.5,788.5 1152.7,786.8 1156.2,781.5 1168.6,778.8 1171.3,775.3 1191.6,770.0 1195.1,764.7 1207.5,762.9 1211.0,756.7 1227.0,751.4 1265.9,744.3 1271.2,735.5 1285.3,732.8 1288.9,725.8 1306.1,722.9 1310.2,719.2 1345.7,713.2 1348.9,706.7 1406.2,697.9 1412.7,687.4 1432.1,683.3 1438.5,676.1 1451.4,672.8 1483.7,664.8 1491.8,662.3 1516.0,657.5 1553.2,651.0 1561.2,639.7 1579.0,634.9 1582.2,632.0 1595.9,631.3 1599.2,625.2 1610.5,622.8 1612.9,617.9 1621.0,616.3 1624.2,610.7 1628.2,609.9 1629.8,680.1 1631.5,681.7 1635.5,676.9 1637.1,664.0 1652.0,657.1 1660.4,649.5 1663.8,642.8 1677.3,633.5 1682.3,628.4 1684.0,616.6 1697.5,610.7 1700.9,587.9 1707.6,582.5 1717.8,581.2 1719.5,577.8 1734.7,573.6 1765.0,570.2 1770.1,567.7 1787.0,566.0 1790.4,559.2 1824.1,555.0 1827.5,549.9 1837.6,540.6 1863.0,533.9 1866.3,532.2 1883.2,530.5 1888.3,524.6 1917.0,521.2 1919.5,517.0 1953.3,511.1 1954.1,583.7 1963.0,581.3 1967.4,577.7 1999.2,567.5 2002.1,564.7 2016.5,556.7 2036.8,550.2 2039.7,529.9 2065.7,519.8 2070.1,516.2 2100.4,503.9 2103.3,502.5 2113.5,489.4 2122.1,486.5 2123.6,483.6 2135.2,481.5 2138.0,476.4 2149.6,474.2 2151.8,540.8 2154.7,540.1" fill="none" stroke="#f0bf7a" stroke-width="2.4" stroke-linejoin="round"/>
<polyline points="695.6,924.6 731.7,919.0 734.5,914.8 741.4,912.0 745.6,903.7 760.9,902.3 765.0,896.0 787.3,892.6 790.0,888.4 865.1,878.7 870.7,872.4 931.9,863.4 934.6,859.2 984.7,853.7 988.9,848.1 1027.1,839.0 1032.4,832.8 1041.3,831.0 1044.8,826.6 1057.2,823.9 1060.7,819.5 1071.3,818.6 1074.9,813.3 1096.1,808.9 1098.8,803.6 1117.3,800.9 1120.9,796.5 1129.7,793.8 1138.5,788.5 1152.7,786.8 1156.2,781.5 1168.6,778.8 1171.3,775.3 1191.6,770.0 1195.1,764.7 1207.5,762.9 1211.0,756.7 1227.0,751.4 1265.9,744.3 1271.2,735.5 1285.3,732.8 1288.9,725.8 1306.1,722.9 1310.2,719.2 1345.7,713.2 1348.9,706.7 1406.2,697.9 1412.7,687.4 1432.1,683.3 1438.5,676.1 1451.4,672.8 1483.7,664.8 1491.8,662.3 1516.0,657.5 1553.2,651.0 1561.2,639.7 1579.0,634.9 1582.2,632.0 1595.9,631.3 1599.2,625.2 1610.5,622.8 1612.9,617.9 1621.0,616.3 1624.2,610.7 1628.2,609.9 1629.8,680.1 1631.5,681.7 1635.5,676.9 1637.1,664.0 1652.0,657.1 1660.4,649.5 1663.8,642.8 1677.3,633.5 1682.3,628.4 1684.0,616.6 1697.5,610.7 1700.9,587.9 1707.6,582.5 1717.8,581.2 1719.5,577.8 1734.7,573.6 1765.0,570.2 1770.1,567.7 1787.0,566.0 1790.4,559.2 1824.1,555.0 1827.5,549.9 1837.6,540.6 1863.0,533.9 1866.3,532.2 1883.2,530.5 1888.3,524.6 1917.0,521.2 1919.5,517.0 1953.3,511.1 1954.1,583.7 1963.0,581.3 1967.4,577.7 1999.2,567.5 2002.1,564.7 2016.5,556.7 2036.8,550.2 2039.7,529.9 2065.7,519.8 2070.1,516.2 2100.4,503.9 2103.3,502.5 2113.5,489.4 2122.1,486.5 2123.6,483.6 2135.2,481.5 2138.0,476.4 2149.6,474.2 2151.8,540.8 2154.7,540.1" fill="none" stroke="#c86e45" stroke-width="1.5" stroke-linejoin="round"/>
<circle cx="695.7" cy="925" r="9.5" fill="#c9f2d2" opacity="0.6"/>
<circle cx="927.7" cy="924.6" r="9.5" fill="#c9f2d2" opacity="0.6"/>
<circle cx="695.7" cy="925" r="7" fill="#17973f"/>
<circle cx="927.7" cy="924.6" r="7" fill="#17973f"/>
<circle cx="2159.8" cy="438.8" r="7" fill="#d63b3b"/>
<line x1="684" y1="1034.5" x2="715.3" y2="1034.5" stroke="#e6dca0" stroke-width="3"/>
<line x1="1043.3" y1="1034.5" x2="1074.7" y2="1034.5" stroke="#e0a0a6" stroke-width="3"/>
<circle cx="1419.5" cy="1034.7" r="6.5" fill="#17973f"/>
<circle cx="1778.9" cy="1034.7" r="6.5" fill="#d63b3b"/>
</svg>
<span class="t" style="left:31.99px;top:31.00px;font-size:47.5px;color:#333;-webkit-text-stroke:0.7px #333;">FXStabilizer</span>
<span class="t" style="left:313.26px;top:31.00px;font-size:47.5px;color:#333;transform:scaleX(0.9237);-webkit-text-stroke:0.7px #333;">USDCAD</span>
<span class="t" style="left:1422.77px;top:45.00px;font-size:29px;color:#2f3338;transform:scaleX(0.9823);-webkit-text-stroke:0.35px #2f3338;">Discuss</span>
<span class="t" style="left:1649.00px;top:45.00px;font-size:29px;color:#2f3338;transform:scaleX(0.9818);-webkit-text-stroke:0.35px #2f3338;">Add to watch</span>
<span class="t" style="left:1944.68px;top:45.00px;font-size:29px;color:#2f3338;transform:scaleX(0.9706);-webkit-text-stroke:0.35px #2f3338;">Custom Analysis</span>
<span class="t" style="left:92.80px;top:121.00px;font-size:29px;color:#666;transform:scaleX(0.9823);-webkit-text-stroke:0.35px #666;">forexstore</span>
<span class="t" style="left:238.77px;top:121.00px;font-size:29px;color:#4a4a4a;transform:scaleX(0.8968);-webkit-text-stroke:0.35px #4a4a4a;">Real (USD),</span>
<span class="t" style="left:383.89px;top:121.00px;font-size:29px;color:#555;transform:scaleX(0.9317);-webkit-text-stroke:0.35px #555;">FXOpen</span>
<span class="t" style="left:488.85px;top:121.00px;font-size:29px;color:#4a4a4a;transform:scaleX(0.9503);-webkit-text-stroke:0.35px #4a4a4a;">, Technical , Automated , MetaTrader 4</span>
<span class="t" style="left:92.39px;top:206.00px;font-size:27.5px;color:#555;transform:scaleX(0.9462);-webkit-text-stroke:0.35px #555;">Track record</span>
<span class="t" style="left:354.60px;top:206.00px;font-size:27.5px;color:#555;transform:scaleX(0.9407);-webkit-text-stroke:0.35px #555;">Trading privileges</span>
<span class="t" style="left:673.95px;top:206.00px;font-size:27.5px;color:#555;transform:scaleX(0.9537);-webkit-text-stroke:0.35px #555;">Live update</span>
<span class="t" style="left:927.31px;top:206.00px;font-size:27.5px;color:#555;transform:scaleX(0.9232);-webkit-text-stroke:0.35px #555;">Cashback</span>
<span class="t" style="left:2089.90px;top:207.00px;font-size:29px;color:#ffffff;font-weight:bold;transform:scaleX(0.8819);">Copy</span>
<span class="t" style="left:62.92px;top:339.00px;font-size:29px;color:#555;transform:scaleX(1.0483);-webkit-text-stroke:0.9px #555;">Info</span>
<span class="t" style="left:159.41px;top:339.00px;font-size:29px;color:#555;transform:scaleX(0.9802);-webkit-text-stroke:0.35px #555;">Stats</span>
<span class="t" style="left:269.13px;top:339.00px;font-size:29px;color:#555;transform:scaleX(0.9329);-webkit-text-stroke:0.35px #555;">General</span>
<span class="t" style="left:51.90px;top:404.00px;font-size:25.5px;color:#444;font-weight:bold;transform:scaleX(0.8768);">Gain :</span>
<span class="t" style="left:52.60px;top:456.00px;font-size:25.5px;color:#555;transform:scaleX(0.9147);-webkit-text-stroke:0.35px #555;">Abs. Gain:</span>
<span class="t" style="left:50.76px;top:530.00px;font-size:25.5px;color:#555;transform:scaleX(0.9216);-webkit-text-stroke:0.35px #555;">Daily</span>
<span class="t" style="left:50.65px;top:582.00px;font-size:25.5px;color:#555;transform:scaleX(0.9796);-webkit-text-stroke:0.35px #555;">Monthly:</span>
<span class="t" style="left:50.71px;top:634.00px;font-size:25.5px;color:#555;transform:scaleX(0.9493);-webkit-text-stroke:0.35px #555;">Drawdown:</span>
<span class="t" style="left:50.81px;top:698.00px;font-size:25.5px;color:#555;transform:scaleX(0.9511);-webkit-text-stroke:0.35px #555;">Balance:</span>
<span class="t" style="left:50.80px;top:742.00px;font-size:25.5px;color:#555;transform:scaleX(0.9517);-webkit-text-stroke:0.35px #555;">Equity:</span>
<span class="t" style="left:50.76px;top:784.00px;font-size:25.5px;color:#555;transform:scaleX(0.9748);-webkit-text-stroke:0.35px #555;">Highest:</span>
<span class="t" style="left:50.70px;top:825.00px;font-size:25.5px;color:#555;transform:scaleX(1.0031);-webkit-text-stroke:0.35px #555;">Profit:</span>
<span class="t" style="left:50.77px;top:867.00px;font-size:25.5px;color:#555;transform:scaleX(0.9712);-webkit-text-stroke:0.35px #555;">Interest:</span>
<span class="t" style="left:50.69px;top:931.00px;font-size:25.5px;color:#555;transform:scaleX(0.9598);-webkit-text-stroke:0.35px #555;">Deposits:</span>
<span class="t" style="left:52.60px;top:973.00px;font-size:25.5px;color:#555;transform:scaleX(0.9454);-webkit-text-stroke:0.35px #555;">Withdrawals:</span>
<span class="t" style="left:51.10px;top:1037.00px;font-size:25.5px;color:#555;transform:scaleX(0.9402);-webkit-text-stroke:0.35px #555;">Updated</span>
<span class="t" style="left:52.22px;top:1081.00px;font-size:25.5px;color:#555;transform:scaleX(0.9526);-webkit-text-stroke:0.35px #555;">Tracking</span>
<span class="t" style="left:406.26px;top:407.00px;font-size:25.5px;color:#23985a;font-weight:bold;transform:scaleX(0.9287);">+1,266.62%</span>
<span class="t" style="left:410.32px;top:459.00px;font-size:25.5px;color:#35a86c;transform:scaleX(0.9016);-webkit-text-stroke:0.35px #35a86c;">+1,222.59%</span>
<span class="t" style="left:468.28px;top:534.00px;font-size:25.5px;color:#444;transform:scaleX(0.9046);-webkit-text-stroke:0.35px #444;">0.10%</span>
<span class="t" style="left:468.28px;top:588.00px;font-size:25.5px;color:#444;transform:scaleX(0.9046);-webkit-text-stroke:0.35px #444;">3.55%</span>
<span class="t" style="left:454.61px;top:634.00px;font-size:25.5px;color:#444;transform:scaleX(0.9145);-webkit-text-stroke:0.35px #444;">23.64%</span>
<span class="t" style="left:474.00px;top:697.00px;font-size:25.5px;color:#444;transform:scaleX(0.9181);-webkit-text-stroke:0.35px #444;">$0.00</span>
<span class="t" style="left:422.95px;top:742.00px;font-size:25.5px;color:#444;transform:scaleX(0.8787);-webkit-text-stroke:0.35px #444;">(0%) $0.00</span>
<span class="t" style="left:326.00px;top:784.00px;font-size:25.5px;color:#aaaaaa;transform:scaleX(0.8398);-webkit-text-stroke:0.35px #aaaaaa;">(Dec 03)</span>
<span class="t" style="left:414.90px;top:784.00px;font-size:25.5px;color:#444;transform:scaleX(0.9250);-webkit-text-stroke:0.35px #444;">$47,974.48</span>
<span class="t" style="left:414.90px;top:825.00px;font-size:25.5px;color:#35a86c;transform:scaleX(0.9221);-webkit-text-stroke:0.35px #35a86c;">$38,355.64</span>
<span class="t" style="left:420.06px;top:867.00px;font-size:25.5px;color:#444;transform:scaleX(0.9259);-webkit-text-stroke:0.35px #444;">-$3,284.97</span>
<span class="t" style="left:428.50px;top:931.00px;font-size:25.5px;color:#444;transform:scaleX(0.9122);-webkit-text-stroke:0.35px #444;">$3,100.00</span>
<span class="t" style="left:414.60px;top:973.00px;font-size:25.5px;color:#444;transform:scaleX(0.9227);-webkit-text-stroke:0.35px #444;">$41,492.88</span>
<span class="t" style="left:368.43px;top:1037.00px;font-size:25.5px;color:#444;transform:scaleX(0.9325);-webkit-text-stroke:0.35px #444;">Jan 31 at 04:52</span>
<span class="t" style="left:491.48px;top:1081.00px;font-size:25.5px;color:#444;transform:scaleX(0.9525);-webkit-text-stroke:0.35px #444;">140</span>
<span class="t" style="left:608.18px;top:339.00px;font-size:29px;color:#555;transform:scaleX(0.9691);-webkit-text-stroke:0.9px #555;">Chart</span>
<span class="t" style="left:722.97px;top:339.00px;font-size:29px;color:#555;transform:scaleX(0.9759);-webkit-text-stroke:0.35px #555;">Growth</span>
<span class="t" style="left:858.62px;top:339.00px;font-size:29px;color:#555;transform:scaleX(0.9639);-webkit-text-stroke:0.35px #555;">Balance</span>
<span class="t" style="left:1003.72px;top:339.00px;font-size:29px;color:#555;transform:scaleX(1.0073);-webkit-text-stroke:0.35px #555;">Profit</span>
<span class="t" style="left:1117.69px;top:339.00px;font-size:29px;color:#555;transform:scaleX(0.9774);-webkit-text-stroke:0.35px #555;">Drawdown</span>
<span class="t" style="left:1295.75px;top:339.00px;font-size:29px;color:#555;transform:scaleX(0.9912);-webkit-text-stroke:0.35px #555;">Margin</span>
<span class="t" style="left:1407.38px;top:344.00px;font-size:21.5px;color:#ffffff;font-weight:bold;transform:scaleX(0.9828);">New</span>
<span class="t" style="left:623.29px;top:432.00px;font-size:18px;color:#666;transform:scaleX(0.9824);">1.60K%</span>
<span class="t" style="left:623.90px;top:554.00px;font-size:18px;color:#666;transform:scaleX(0.9758);">1.20K%</span>
<span class="t" style="left:640.15px;top:675.00px;font-size:18px;color:#666;transform:scaleX(0.9836);">800%</span>
<span class="t" style="left:640.63px;top:795.00px;font-size:18px;color:#666;transform:scaleX(0.9642);">400%</span>
<span class="t" style="left:659.75px;top:917.00px;font-size:18px;color:#666;transform:scaleX(0.9712);">0%</span>
<span class="t" style="left:643.66px;top:960.00px;font-size:21.5px;color:#666;transform:scaleX(1.0304);-webkit-text-stroke:0.35px #666;">Oct 30, '18</span>
<span class="t" style="left:933.27px;top:960.00px;font-size:21.5px;color:#666;transform:scaleX(1.0290);-webkit-text-stroke:0.35px #666;">Mar 09, '20</span>
<span class="t" style="left:1232.26px;top:960.00px;font-size:21.5px;color:#666;transform:scaleX(1.0132);-webkit-text-stroke:0.35px #666;">Jul 02, '21</span>
<span class="t" style="left:1524.96px;top:960.00px;font-size:21.5px;color:#666;transform:scaleX(1.0267);-webkit-text-stroke:0.35px #666;">Jul 01, '22</span>
<span class="t" style="left:1813.05px;top:960.00px;font-size:21.5px;color:#666;transform:scaleX(1.0309);-webkit-text-stroke:0.35px #666;">Jun 21, '23</span>
<span class="t" style="left:2048.37px;top:960.00px;font-size:21.5px;color:#666;transform:scaleX(1.0305);-webkit-text-stroke:0.35px #666;">Dec 24, '24</span>
<span class="t" style="left:724.57px;top:1024.00px;font-size:21.5px;color:#333;transform:scaleX(1.0285);-webkit-text-stroke:0.35px #333;">Equity Growth</span>
<span class="t" style="left:1084.66px;top:1024.00px;font-size:21.5px;color:#333;transform:scaleX(1.0301);-webkit-text-stroke:0.35px #333;">Growth</span>
<span class="t" style="left:1443.87px;top:1024.00px;font-size:21.5px;color:#333;transform:scaleX(1.0324);-webkit-text-stroke:0.35px #333;">Deposit</span>
<span class="t" style="left:1805.00px;top:1024.00px;font-size:21.5px;color:#333;transform:scaleX(1.0370);-webkit-text-stroke:0.35px #333;">Withdrawal</span>
<span class="t" style="left:64.96px;top:1187.00px;font-size:29px;color:#555;transform:scaleX(0.9688);-webkit-text-stroke:0.9px #555;">Trading</span>
<span class="t" style="left:203.58px;top:1187.00px;font-size:29px;color:#555;transform:scaleX(0.9784);-webkit-text-stroke:0.35px #555;">Periods</span>
<span class="t" style="left:345.21px;top:1187.00px;font-size:29px;color:#555;transform:scaleX(0.9511);-webkit-text-stroke:0.35px #555;">Goals</span>
<span class="t" style="left:462.71px;top:1187.00px;font-size:29px;color:#555;transform:scaleX(0.9649);-webkit-text-stroke:0.35px #555;">Browser</span>
</body></html>
